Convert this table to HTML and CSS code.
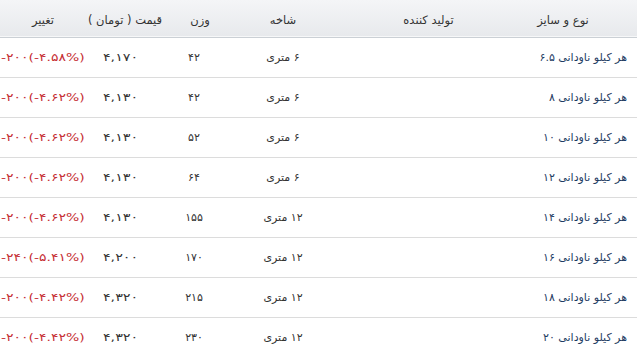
FILE: index.html
```html
<!DOCTYPE html>
<html lang="fa" dir="rtl">
<head>
<meta charset="utf-8">
<title>قیمت ناودانی</title>
<link rel="stylesheet" href="styles.css">
</head>
<body>
<table class="price-table">
  <colgroup>
    <col class="c-name"><col class="c-maker"><col class="c-branch"><col class="c-weight"><col class="c-price"><col class="c-change">
  </colgroup>
  <thead>
    <tr>
      <th class="h-name">نوع و سایز</th>
      <th class="h-maker">تولید کننده</th>
      <th>شاخه</th>
      <th>وزن</th>
      <th>قیمت ( تومان )</th>
      <th>تغییر</th>
    </tr>
  </thead>
  <tbody>
    <tr><td class="name">هر کیلو ناودانی ۶.۵</td><td></td><td>۶ متری</td><td class="weight">۴۲</td><td class="price"><span class="wide">۴,۱۷۰</span></td><td class="change"><span class="wide" dir="ltr">-۲۰۰(-۴.۵۸%)</span></td></tr>
    <tr><td class="name">هر کیلو ناودانی ۸</td><td></td><td>۶ متری</td><td class="weight">۴۲</td><td class="price"><span class="wide">۴,۱۳۰</span></td><td class="change"><span class="wide" dir="ltr">-۲۰۰(-۴.۶۲%)</span></td></tr>
    <tr><td class="name">هر کیلو ناودانی ۱۰</td><td></td><td>۶ متری</td><td class="weight">۵۲</td><td class="price"><span class="wide">۴,۱۳۰</span></td><td class="change"><span class="wide" dir="ltr">-۲۰۰(-۴.۶۲%)</span></td></tr>
    <tr><td class="name">هر کیلو ناودانی ۱۲</td><td></td><td>۶ متری</td><td class="weight">۶۴</td><td class="price"><span class="wide">۴,۱۳۰</span></td><td class="change"><span class="wide" dir="ltr">-۲۰۰(-۴.۶۲%)</span></td></tr>
    <tr><td class="name">هر کیلو ناودانی ۱۴</td><td></td><td>۱۲ متری</td><td class="weight">۱۵۵</td><td class="price"><span class="wide">۴,۱۳۰</span></td><td class="change"><span class="wide" dir="ltr">-۲۰۰(-۴.۶۲%)</span></td></tr>
    <tr><td class="name">هر کیلو ناودانی ۱۶</td><td></td><td>۱۲ متری</td><td class="weight">۱۷۰</td><td class="price"><span class="wide">۴,۲۰۰</span></td><td class="change"><span class="wide" dir="ltr">-۲۴۰(-۵.۴۱%)</span></td></tr>
    <tr><td class="name">هر کیلو ناودانی ۱۸</td><td></td><td>۱۲ متری</td><td class="weight">۲۱۵</td><td class="price"><span class="wide">۴,۳۲۰</span></td><td class="change"><span class="wide" dir="ltr">-۲۰۰(-۴.۴۲%)</span></td></tr>
    <tr><td class="name">هر کیلو ناودانی ۲۰</td><td></td><td>۱۲ متری</td><td class="weight">۲۳۰</td><td class="price"><span class="wide">۴,۳۲۰</span></td><td class="change"><span class="wide" dir="ltr">-۲۰۰(-۴.۴۲%)</span></td></tr>
  </tbody>
</table>
</body>
</html>
```
FILE: styles.css
```css
html, body {
  margin: 0;
  padding: 0;
  background: #ffffff;
}
body {
  font-family: "DejaVu Sans", "Noto Sans", sans-serif;
  font-size: 11px;
  color: #333333;
  overflow: hidden;
}
.price-table {
  width: 637px;
  border-collapse: collapse;
  table-layout: fixed;
}
.c-name { width: 148px; }
.c-maker { width: 159px; }
.c-branch { width: 94px; }
.c-weight { width: 72px; }
.c-price { width: 78px; }
.c-change { width: 86px; }

.price-table th {
  height: 37px;
  padding: 3px 0 0;
  font-size: 11.5px;
  font-weight: normal;
  text-align: center;
  color: #333333;
  background: linear-gradient(#f4f5f7, #e7e9ec);
  border-bottom: 1px solid #cbd0d5;
  box-shadow: inset 0 -1px 0 #f6f7f8;
  white-space: nowrap;
  box-sizing: border-box;
}
.price-table th.h-maker {
  padding-left: 38px;
}
.price-table td {
  height: 39px;
  padding: 0;
  text-align: center;
  border-bottom: 1px solid #dcdcdc;
  white-space: nowrap;
  color: #333333;
}
.price-table td.name {
  text-align: right;
  padding-right: 10px;
  color: #1f3d63;
}
.wide {
  display: inline-block;
}
.price-table td.weight {
  padding-right: 12px;
}
.price-table td.price {
  padding-right: 8px;
}
.price-table td.price .wide {
  transform: scaleX(1.3);
}
.price-table td.change {
  text-align: left;
  padding-left: 1px;
  color: #c62f35;
}
.price-table td.change .wide {
  transform: scaleX(1.27);
  transform-origin: left center;
}
```
